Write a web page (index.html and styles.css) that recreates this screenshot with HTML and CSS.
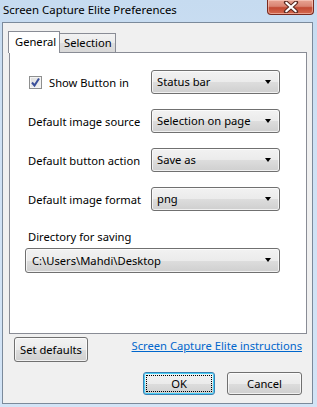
FILE: index.html
```html
<!DOCTYPE html>
<html>
<head>
<meta charset="utf-8">
<link rel="stylesheet" href="styles.css">
</head>
<body>
<div class="window">
  <div class="titlebar">
    <span class="title">Screen Capture Elite Preferences</span>
    <div class="close">
      <svg width="16" height="12" viewBox="0 0 16 12"><path d="M3 1.5 L13 10.5 M13 1.5 L3 10.5" stroke="#5a2a22" stroke-width="4.2" stroke-linecap="round"/><path d="M3.3 1.8 L12.7 10.2 M12.7 1.8 L3.3 10.2" stroke="#ffffff" stroke-width="2.2" stroke-linecap="round"/></svg>
    </div>
  </div>
  <div class="client">
    <div class="tabs">
      <div class="tab active">General</div>
      <div class="tab">Selection</div>
    </div>
    <div class="panel">
      <div class="row">
        <label class="label check-label"><span class="checkbox"><svg width="11" height="11" viewBox="0 0 11 11"><path d="M2 5.5 L4.5 8.5 L9 1.5" fill="none" stroke="#3a4f9a" stroke-width="2"/></svg></span>Show Button in</label>
        <div class="select">Status bar<span class="arrow"></span></div>
      </div>
      <div class="row">
        <span class="label">Default image source</span>
        <div class="select">Selection on page<span class="arrow"></span></div>
      </div>
      <div class="row">
        <span class="label">Default button action</span>
        <div class="select">Save as<span class="arrow"></span></div>
      </div>
      <div class="row">
        <span class="label">Default image format</span>
        <div class="select">png<span class="arrow"></span></div>
      </div>
      <div class="dir-label">Directory for saving</div>
      <div class="select wide">C:\Users\Mahdi\Desktop<span class="arrow"></span></div>
    </div>
    <div class="bottom-row">
      <div class="button defaults">Set defaults</div>
      <a class="link" href="#">Screen Capture Elite instructions</a>
    </div>
    <div class="actions">
      <div class="button ok"><span class="focus">OK</span></div>
      <div class="button cancel">Cancel</div>
    </div>
  </div>
</div>
</body>
</html>
```
FILE: styles.css
```css
html, body {
  margin: 0;
  padding: 0;
}
body {
  width: 317px;
  height: 407px;
  overflow: hidden;
  font-family: "Noto Sans", "Open Sans", sans-serif;
  font-size: 11.2px;
  color: #000;
}
.window {
  width: 317px;
  height: 407px;
  box-sizing: border-box;
  display: flex;
  flex-direction: column;
  background: linear-gradient(180deg, #c6dbf0 0%, #cfe1f4 30%, #d3e4f6 100%);
}
.titlebar {
  height: 22px;
  display: flex;
  justify-content: space-between;
  align-items: flex-start;
  flex: none;
}
.title {
  margin-left: 3px;
  margin-top: 2px;
  line-height: 16px;
  font-size: 11.4px;
  color: #000;
}
.close {
  width: 47px;
  height: 15px;
  margin-right: 3px;
  box-sizing: border-box;
  border: 1px solid #7a2a1e;
  border-top: none;
  border-radius: 0 0 4px 4px;
  background: linear-gradient(180deg, #e8a493 0%, #d98472 45%, #c24a33 55%, #d5694f 100%);
  box-shadow: inset 0 0 0 1px rgba(255, 220, 210, 0.5);
  display: flex;
  justify-content: center;
  align-items: center;
}
.client {
  flex: 1;
  margin: 0 4px 3px 2px;
  border: 1px solid #7b8a9b;
  background: #f0f0f0;
  display: flex;
  flex-direction: column;
}
.tabs {
  display: flex;
  align-items: flex-end;
  height: 21px;
  margin-top: 8px;
  padding-left: 5px;
}
.tab {
  box-sizing: border-box;
  height: 19px;
  padding: 0 0 0 4px;
  border: 1px solid #898c95;
  border-bottom: none;
  border-left: none;
  background: linear-gradient(180deg, #f2f2f2 0%, #ebebeb 50%, #dddddd 51%, #d9d9d9 100%);
  line-height: 18px;
  width: 56px;
}
.tab.active {
  height: 22px;
  margin-bottom: -1px;
  width: 52px;
  border-left: 1px solid #898c95;
  border-right: 1px solid #898c95;
  background: #fff;
  position: relative;
  z-index: 1;
  padding-left: 6px;
  line-height: 19px;
}
.tab.active + .tab {
  border-left: none;
}
.panel {
  margin-left: 6px;
  width: 298px;
  height: 282px;
  box-sizing: border-box;
  border: 1px solid #898c95;
  background: #fff;
  padding: 17px 0 0 18px;
  display: flex;
  flex-direction: column;
}
.row {
  display: flex;
  align-items: center;
  height: 24px;
  margin-bottom: 15px;
}
.label {
  width: 123px;
  flex: none;
  white-space: nowrap;
}
.check-label {
  display: flex;
  align-items: center;
  margin-left: 1px;
  width: 122px;
}
.checkbox {
  width: 13px;
  height: 13px;
  box-sizing: border-box;
  border: 1px solid #8e8f8f;
  background: linear-gradient(135deg, #dcdcdc 0%, #f4f4f4 100%);
  box-shadow: inset 0 0 0 1px #f4f4f4;
  margin-right: 7px;
  display: flex;
  align-items: center;
  justify-content: center;
}
.select {
  position: relative;
  width: 129px;
  height: 24px;
  box-sizing: border-box;
  border: 1px solid #707070;
  border-radius: 3px;
  background: linear-gradient(180deg, #f2f2f2 0%, #ebebeb 50%, #dddddd 51%, #cfcfcf 100%);
  box-shadow: inset 0 0 0 1px rgba(255, 255, 255, 0.7);
  padding-left: 5px;
  line-height: 22px;
  white-space: nowrap;
}
.arrow {
  position: absolute;
  right: 8px;
  top: 9px;
  width: 0;
  height: 0;
  border-left: 3.5px solid transparent;
  border-right: 3.5px solid transparent;
  border-top: 4px solid #000;
}
.dir-label {
  margin-top: 3px;
  line-height: 16px;
}
.select.wide {
  width: 255px;
  margin-left: -3px;
  margin-top: 3px;
  height: 25px;
  line-height: 23px;
  padding-left: 6px;
}
.bottom-row {
  display: flex;
  justify-content: space-between;
  align-items: flex-start;
  padding: 0 10px 0 11px;
  margin-top: 3px;
}
.button {
  box-sizing: border-box;
  height: 25px;
  border: 1px solid #707070;
  border-radius: 3px;
  background: linear-gradient(180deg, #f2f2f2 0%, #ebebeb 50%, #dddddd 51%, #cfcfcf 100%);
  box-shadow: inset 0 0 0 1px rgba(255, 255, 255, 0.7);
  display: flex;
  align-items: center;
  justify-content: center;
}
.defaults {
  width: 74px;
}
.link {
  color: #0066cc;
  text-decoration: underline;
  margin-top: 1px;
  line-height: 16px;
}
.actions {
  display: flex;
  justify-content: flex-end;
  gap: 12px;
  padding-right: 10px;
  margin-top: 10px;
}
.actions .button {
  height: 23px;
}
.ok {
  width: 72px;
  border-color: #3c7fb1;
  box-shadow: inset 0 0 0 1px #48d0f8;
  padding: 2px;
}
.focus {
  flex: 1;
  align-self: stretch;
  display: flex;
  align-items: center;
  justify-content: center;
  border: 1px dotted #000;
}
.cancel {
  width: 75px;
}
```
